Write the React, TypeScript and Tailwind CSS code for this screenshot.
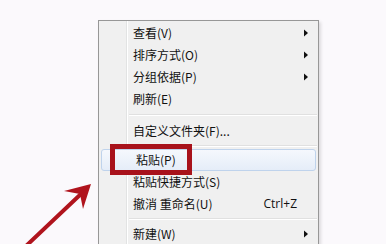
import React from "react";

const Arrow = () => (
  <svg width="8" height="8" viewBox="0 0 8 8" className="block">
    <path d="M2 0.5 L6 4 L2 7.5 Z" fill="#111" />
  </svg>
);

type Item = { label: string; arrow?: boolean; shortcut?: string; hl?: boolean };

const Row = ({ label, arrow, shortcut, hl }: Item) => (
  <div
    className={
      "flex h-[22px] items-center pl-[34px] pr-[8px] " +
      (hl
        ? "mx-[2px] pl-[31px] pr-[6px] rounded-[3px] border border-[#bfd3ec] bg-gradient-to-b from-[#f5f8fd] to-[#e5edf8]"
        : "")
    }
  >
    <span className="flex-1 whitespace-nowrap">{label}</span>
    {shortcut && (
      <span className="mr-[13px] font-['Open_Sans',sans-serif] text-[12px]">{shortcut}</span>
    )}
    {arrow && <Arrow />}
  </div>
);

const Sep = ({ h }: { h: string }) => (
  <div className={"flex items-center pl-[30px] pr-[1px] " + h}>
    <div className="w-full">
      <div className="h-px bg-[#e0e0e0]" />
      <div className="h-px bg-white" />
    </div>
  </div>
);

export default function App() {
  return (
    <div className="relative h-[244px] w-[386px] overflow-hidden bg-[#fbf9fc] font-['Noto_Sans_CJK_SC',sans-serif] text-[12px] text-[#111]">
      <div className="ml-[98px] mt-[20px] h-[230px] w-[221px] border border-b-0 border-[#979797] bg-[#f0f0f0] relative pt-px shadow-[2px_2px_3px_rgba(0,0,0,0.12)]">
        <div className="absolute left-[27px] top-0 bottom-0 flex">
          <div className="w-px bg-[#e2e3e3]" />
          <div className="w-px bg-white" />
        </div>
        <div className="relative">
          <Row label="查看(V)" arrow />
          <Row label="排序方式(O)" arrow />
          <Row label="分组依据(P)" arrow />
          <Row label="刷新(E)" />
          <Sep h="h-[10px]" />
          <Row label="自定义文件夹(F)..." />
          <Sep h="h-[7px]" />
          <Row label="粘贴(P)" hl />
          <Row label="粘贴快捷方式(S)" />
          <Row label="撤消 重命名(U)" shortcut="Ctrl+Z" />
          <Sep h="h-[8px]" />
          <Row label="新建(W)" arrow />
        </div>
      </div>
      <div className="absolute left-[110px] top-[144px] h-[31px] w-[82px] border-[5px] border-[#a8121b]" />
      <svg className="absolute left-0 top-0" width="386" height="244" viewBox="0 0 386 244">
        <line x1="26" y1="246" x2="82" y2="193" stroke="#b0141d" strokeWidth="4" strokeLinecap="round" />
        <path d="M91 184 L64 191 L80 194 L83 209 Z" fill="#b0141d" />
      </svg>
    </div>
  );
}
